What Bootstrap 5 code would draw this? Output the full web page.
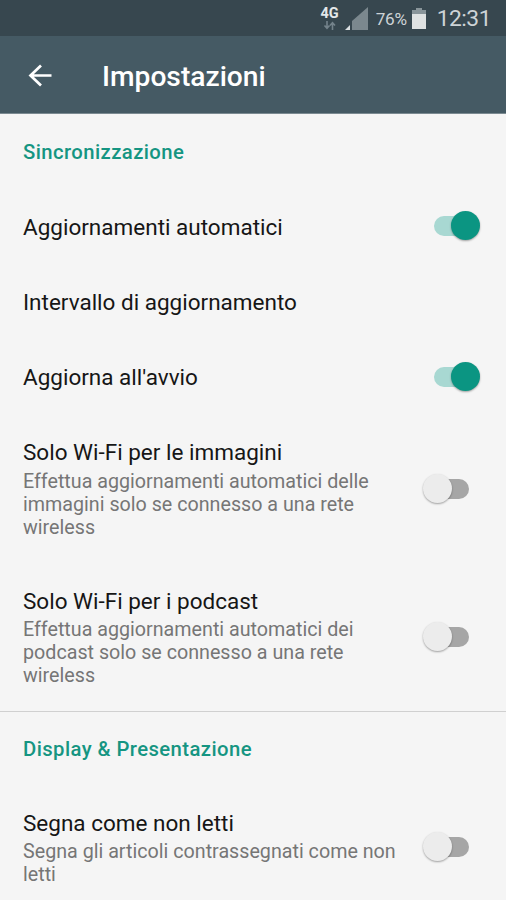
<!DOCTYPE html>
<html lang="it">
<head>
<meta charset="utf-8">
<meta name="viewport" content="width=device-width, initial-scale=1">
<title>Impostazioni</title>
<link href="https://cdn.jsdelivr.net/npm/bootstrap@5.3.0/dist/css/bootstrap.min.css" rel="stylesheet">
<style>
body{font-family:Roboto,"Liberation Sans",sans-serif;background:#f5f5f5;color:#161616;height:900px}
.statusbar{height:36px;background:#37474f;color:#cdd3d6;padding-right:15px}
.appbar{height:78px;background:#455a64;border-bottom:1px solid #7b8a91;padding:4px 0 0 24px}
.appbar h1{font-size:28.2px;line-height:34px;font-weight:500;margin-left:46px}
.net-block{margin-right:5px}
.net{font-size:14.5px;line-height:14px;font-weight:700;color:#e4e8ea}
.battery-pct{font-size:17.2px;line-height:20px;letter-spacing:-.3px;margin:1px 4px 0 8px}
.clock{font-size:22.8px;line-height:28px;letter-spacing:-.5px;margin-left:10px;padding-top:2px}
.section-title{height:74.6px;font-size:20.3px;line-height:23px;letter-spacing:.42px;font-weight:500;color:#159582;padding:3px 24px 0 23px}
.section-next{height:72.5px;padding-top:1px}
.pref{height:75.3px;padding:0 26px 0 23px}
.pref-tall{height:148.4px}
.pref-mid{height:125px}
.pref-text{width:380px;padding-top:1.2px}
.pref-name{font-size:22.5px;line-height:26.4px}
.pref-sum{font-size:19.7px;line-height:23.1px;color:#767676;padding-top:4px}
.toggle{width:57px;height:30px;padding:0 11px}
.track{width:35px;height:20px;background:#a6a6a6}
.thumb{width:29px;height:29px;background:#ececec;box-shadow:0 1px 2px rgba(0,0,0,.35);left:0;top:0}
.toggle.on .track{background:#a8d8d2}
.toggle.on .thumb{left:auto;right:0;background:#0b9582}
.divider{height:1px;background:#d0d0d0}
</style>
</head>
<body class="overflow-hidden">
<div class="statusbar d-flex align-items-center justify-content-end">
  <div class="net-block d-flex flex-column align-items-center">
    <span class="net">4G</span>
    <svg width="13" height="9" viewBox="0 0 13 9" fill="none" stroke="#74838b" stroke-width="1.6"><path d="M4 0v7M1.500 4.500 4 7.200 6.500 4.500M9.500 9V2M7 4.500 9.500 1.800 12 4.500"/></svg>
  </div>
  <svg width="24" height="24" viewBox="0 0 24 24"><path d="M24 1v23H8V15z" fill="#7b888e"/><path d="M6 19v5H1z" fill="#dce0e2"/></svg>
  <span class="battery-pct">76%</span>
  <svg class="battery" width="16" height="21" viewBox="0 0 16 21"><path d="M5 0h6v2h4v5H1V2h4z" fill="#89959a"/><path d="M1 6h14v15H1z" fill="#dfe2e2"/></svg>
  <span class="clock">12:31</span>
</div>
<header class="appbar d-flex align-items-center text-white">
  <svg width="32" height="32" viewBox="0 0 32 32" fill="none" stroke="#fff" stroke-width="2.700"><path d="M27.500 14.500H6.500M17 4.500 6.500 14.500 17 24.500"/></svg>
  <h1 class="mb-0">Impostazioni</h1>
</header>
<main>
  <section>
    <h2 class="section-title d-flex align-items-center mb-0">Sincronizzazione</h2>
    <div class="pref d-flex align-items-center justify-content-between">
      <div class="pref-text"><div class="pref-name">Aggiornamenti automatici</div></div>
      <div class="toggle on position-relative d-flex align-items-center flex-shrink-0"><span class="track rounded-pill"></span><span class="thumb rounded-circle position-absolute"></span></div>
    </div>
    <div class="pref d-flex align-items-center"><div class="pref-text"><div class="pref-name">Intervallo di aggiornamento</div></div></div>
    <div class="pref d-flex align-items-center justify-content-between">
      <div class="pref-text"><div class="pref-name">Aggiorna all'avvio</div></div>
      <div class="toggle on position-relative d-flex align-items-center flex-shrink-0"><span class="track rounded-pill"></span><span class="thumb rounded-circle position-absolute"></span></div>
    </div>
    <div class="pref pref-tall d-flex align-items-center justify-content-between">
      <div class="pref-text"><div class="pref-name">Solo Wi-Fi per le immagini</div><div class="pref-sum">Effettua aggiornamenti automatici delle immagini solo se connesso a una rete wireless</div></div>
      <div class="toggle position-relative d-flex align-items-center flex-shrink-0"><span class="track rounded-pill"></span><span class="thumb rounded-circle position-absolute"></span></div>
    </div>
    <div class="pref pref-tall d-flex align-items-center justify-content-between">
      <div class="pref-text"><div class="pref-name">Solo Wi-Fi per i podcast</div><div class="pref-sum">Effettua aggiornamenti automatici dei podcast solo se connesso a una rete wireless</div></div>
      <div class="toggle position-relative d-flex align-items-center flex-shrink-0"><span class="track rounded-pill"></span><span class="thumb rounded-circle position-absolute"></span></div>
    </div>
  </section>
  <div class="divider"></div>
  <section>
    <h2 class="section-title section-next d-flex align-items-center mb-0">Display &amp; Presentazione</h2>
    <div class="pref pref-mid d-flex align-items-center justify-content-between">
      <div class="pref-text"><div class="pref-name">Segna come non letti</div><div class="pref-sum">Segna gli articoli contrassegnati come non letti</div></div>
      <div class="toggle position-relative d-flex align-items-center flex-shrink-0"><span class="track rounded-pill"></span><span class="thumb rounded-circle position-absolute"></span></div>
    </div>
  </section>
</main>
<script src="https://cdn.jsdelivr.net/npm/bootstrap@5.3.0/dist/js/bootstrap.bundle.min.js"></script>
</body>
</html>
